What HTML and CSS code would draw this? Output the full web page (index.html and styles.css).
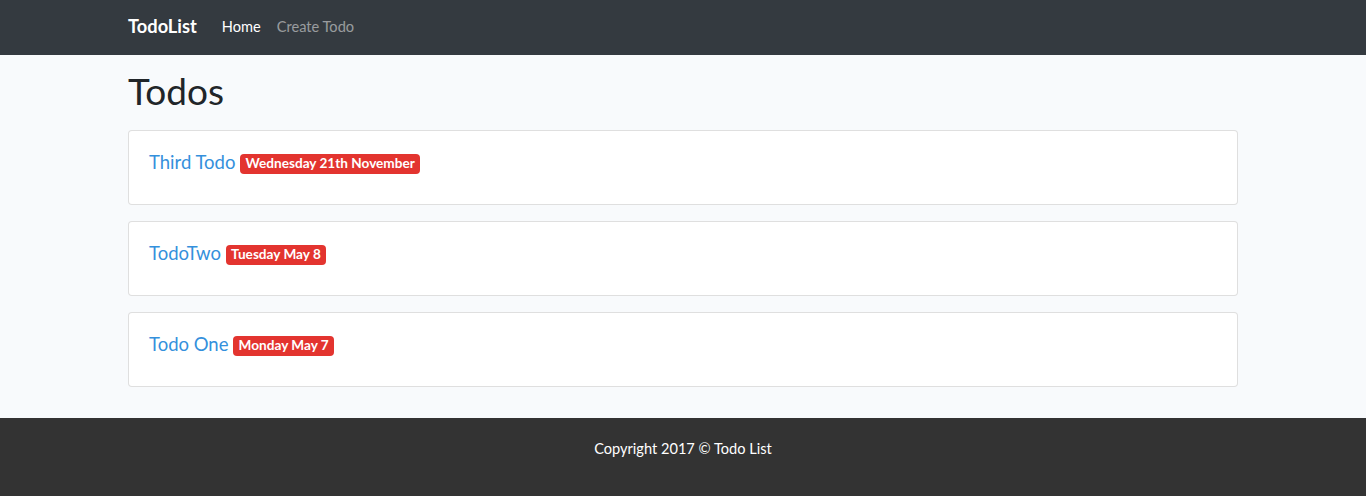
FILE: index.html
```html
<!DOCTYPE html>
<html lang="en">
<head>
<meta charset="utf-8">
<title>TodoList</title>
<link rel="stylesheet" href="styles.css">
</head>
<body>
<nav class="navbar">
  <div class="container nav-inner">
    <a class="brand" href="#">TodoList</a>
    <ul class="nav-links">
      <li><a class="nav-link active" href="#">Home</a></li>
      <li><a class="nav-link" href="#">Create Todo</a></li>
    </ul>
  </div>
</nav>
<main class="main">
  <div class="container">
    <h1 class="page-title">Todos</h1>
    <div class="card">
      <div class="card-body">
        <h3 class="card-title"><a href="#">Third Todo</a> <span class="badge">Wednesday 21th November</span></h3>
      </div>
    </div>
    <div class="card">
      <div class="card-body">
        <h3 class="card-title"><a href="#">TodoTwo</a> <span class="badge">Tuesday May 8</span></h3>
      </div>
    </div>
    <div class="card">
      <div class="card-body">
        <h3 class="card-title"><a href="#">Todo One</a> <span class="badge">Monday May 7</span></h3>
      </div>
    </div>
  </div>
</main>
<footer class="footer">
  <p>Copyright 2017 &copy; Todo List</p>
</footer>
</body>
</html>
```
FILE: styles.css
```css
* { box-sizing: border-box; }
html, body { margin: 0; padding: 0; }
body {
  font-family: Lato, "Noto Sans", sans-serif;
  font-size: 14.4px;
  line-height: 1.6;
  color: #212529;
  background: #f8fafc;
}
a { text-decoration: none; }
.container {
  width: 1140px;
  margin: 0 auto;
  padding: 0 15px;
}
.navbar {
  background: #343a40;
  height: 55px;
  display: flex;
  align-items: center;
}
.nav-inner {
  display: flex;
  align-items: center;
  padding-bottom: 2px;
}
.brand {
  color: #fff;
  font-weight: 700;
  font-size: 18.3px;
  margin-right: 17px;
}
.nav-links {
  list-style: none;
  display: flex;
  margin: 0;
  padding: 0;
}
.nav-link {
  display: block;
  padding: 8px 8px;
  color: rgba(255,255,255,0.5);
  font-size: 14.6px;
}
.nav-link.active { color: #fff; }
.main {
  padding-top: 14px;
  padding-bottom: 15px;
}
.page-title {
  font-size: 37px;
  font-weight: 400;
  line-height: 1.2;
  margin: 0 0 17px;
}
.card {
  background: #fff;
  border: 1px solid rgba(0,0,0,0.125);
  border-radius: 4px;
  margin-bottom: 16px;
}
.card-body { padding: 20px; }
.card-title {
  font-size: 18.5px;
  font-weight: 400;
  line-height: 1.2;
  margin: 0 0 10px;
}
.card-title a { color: #3490dc; }
.badge {
  display: inline-block;
  background: #e3342f;
  color: #fff;
  font-size: 13.6px;
  font-weight: 700;
  line-height: 1;
  padding: 3.4px 5.4px;
  border-radius: 4px;
  vertical-align: 1px;
}
.footer {
  background: #333;
  color: #fff;
  text-align: center;
  height: 78px;
  padding-top: 19px;
}
.footer p { margin: 0; font-size: 14.6px; }
```
